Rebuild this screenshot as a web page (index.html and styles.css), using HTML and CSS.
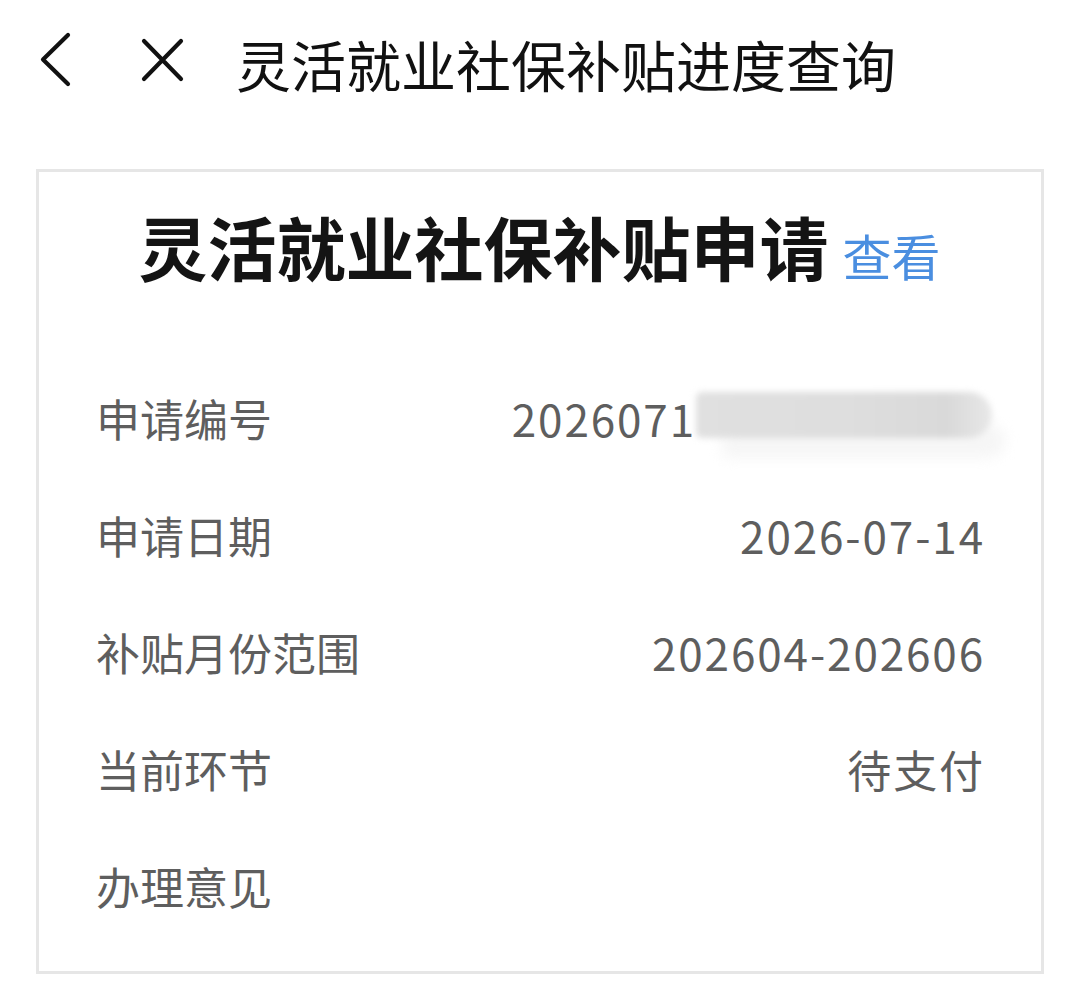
FILE: index.html
```html
<!DOCTYPE html>
<html lang="zh-CN">
<head>
<meta charset="utf-8">
<link rel="stylesheet" href="styles.css">
</head>
<body>
<header class="topbar">
  <svg class="icon-back" width="40" height="60" viewBox="0 0 40 60"><polyline points="32,5 7,29.5 32,54" fill="none" stroke="#111" stroke-width="4.2" stroke-linecap="round" stroke-linejoin="round"/></svg>
  <svg class="icon-close" width="52" height="60" viewBox="0 0 52 60"><path d="M8 11 L45 49 M45 11 L8 49" fill="none" stroke="#111" stroke-width="4.2" stroke-linecap="round"/></svg>
  <h1 class="page-title">灵活就业社保补贴进度查询</h1>
</header>
<main class="card">
  <div class="card-title"><span class="title-text">灵活就业社保补贴申请</span><span class="view-link">查看</span></div>
  <div class="rows">
    <div class="row"><span class="label">申请编号</span><span class="value">2026071<span class="masked"></span></span></div>
    <div class="row"><span class="label">申请日期</span><span class="value">2026-07-14</span></div>
    <div class="row"><span class="label">补贴月份范围</span><span class="value">202604-202606</span></div>
    <div class="row"><span class="label">当前环节</span><span class="value">待支付</span></div>
    <div class="row"><span class="label">办理意见</span><span class="value"></span></div>
  </div>
</main>
</body>
</html>
```
FILE: styles.css
```css
html, body {
  margin: 0;
  padding: 0;
  background: #ffffff;
}
body {
  width: 1080px;
  height: 991px;
  overflow: hidden;
  font-family: "Noto Sans CJK SC", "Noto Sans", sans-serif;
}
.topbar {
  height: 120px;
  display: flex;
  align-items: center;
  padding-left: 36px;
  box-sizing: border-box;
}
.icon-back { display: block; margin-top: -1px; }
.icon-close { display: block; margin-left: 60px; }
.page-title {
  margin: 0 0 0 48px;
  font-size: 55px;
  font-weight: 400;
  color: #111111;
  line-height: 1;
  position: relative;
  top: 3px;
}
.card {
  margin: 49px 36px 0 36px;
  height: 805px;
  border: 3px solid #e6e6e6;
  box-sizing: border-box;
  padding: 40px 58px 0 57px;
}
.card-title {
  display: flex;
  justify-content: center;
  align-items: baseline;
  height: 68px;
}
.title-text {
  font-size: 69px;
  font-weight: 600;
  color: #141414;
  line-height: 68px;
}
.view-link {
  font-size: 49px;
  color: #4a8ee0;
  margin-left: 14px;
  line-height: 68px;
}
.rows {
  margin-top: 79px;
}
.row {
  height: 117px;
  display: flex;
  justify-content: space-between;
  align-items: center;
  font-size: 44px;
  color: #5e5e5e;
}
.label { line-height: 1; }
.value {
  line-height: 1;
  display: flex;
  align-items: center;
  letter-spacing: 1.9px;
  margin-right: -2px;
}
.masked {
  display: inline-block;
  width: 296px;
  height: 46px;
  margin-right: -7px;
  margin-top: -6px;
  background: linear-gradient(90deg, #e0e0e0 0%, #dedede 50%, #d9d9d9 85%, #e8e8e8 100%);
  border-radius: 6px 24px 24px 6px;
  filter: blur(3px);
  box-shadow: 20px 26px 14px -6px #f6f6f6;
}
```
